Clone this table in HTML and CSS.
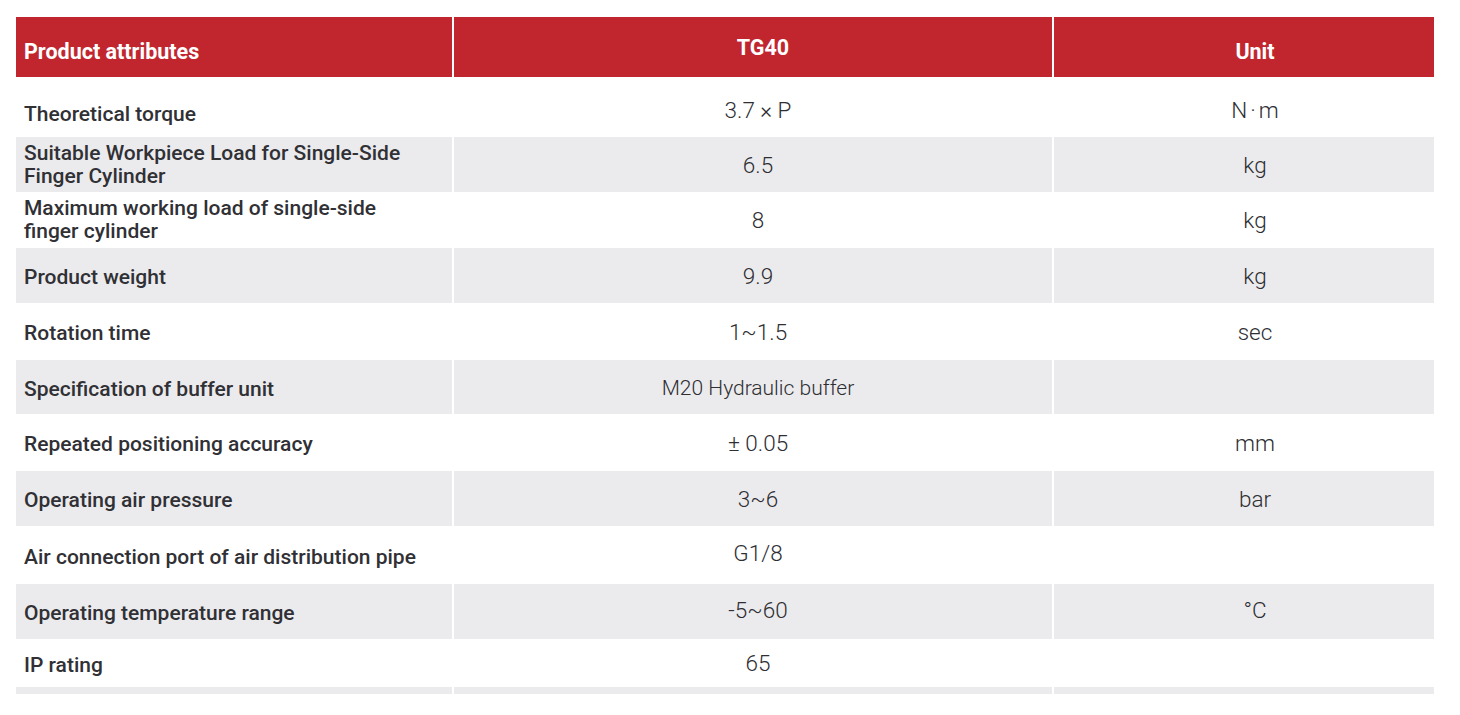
FILE: index.html
```html
<!DOCTYPE html>
<html lang="en">
<head>
<meta charset="utf-8">
<title>TG40 Product attributes</title>
<link rel="stylesheet" href="styles.css">
</head>
<body>
<div class="spec">
  <div class="cell head label">Product attributes</div>
  <div class="cell head model">TG40</div>
  <div class="cell head c3">Unit</div>

  <div class="cell label first">Theoretical torque</div>
  <div class="cell val c2 low">3.7 × P</div>
  <div class="cell val c3 low">N<span class="dot">·</span>m</div>

  <div class="cell label alt two">Suitable Workpiece Load for Single-Side<br>Finger Cylinder</div>
  <div class="cell val alt c2">6.5</div>
  <div class="cell val alt c3">kg</div>

  <div class="cell label two">Maximum working load of single-side<br>finger cylinder</div>
  <div class="cell val c2">8</div>
  <div class="cell val c3">kg</div>

  <div class="cell label alt">Product weight</div>
  <div class="cell val alt c2">9.9</div>
  <div class="cell val alt c3">kg</div>

  <div class="cell label">Rotation time</div>
  <div class="cell val c2">1~1.5</div>
  <div class="cell val c3">sec</div>

  <div class="cell label alt">Specification of buffer unit</div>
  <div class="cell val alt small c2">M20 Hydraulic buffer</div>
  <div class="cell val alt c3"></div>

  <div class="cell label">Repeated positioning accuracy</div>
  <div class="cell val c2">± 0.05</div>
  <div class="cell val c3">mm</div>

  <div class="cell label alt">Operating air pressure</div>
  <div class="cell val alt c2">3~6</div>
  <div class="cell val alt c3">bar</div>

  <div class="cell label">Air connection port of air distribution pipe</div>
  <div class="cell val up c2">G1/8</div>
  <div class="cell val c3"></div>

  <div class="cell label alt">Operating temperature range</div>
  <div class="cell val alt up c2">-5~60</div>
  <div class="cell val alt up c3">°C</div>

  <div class="cell label">IP rating</div>
  <div class="cell val c2">65</div>
  <div class="cell val c3"></div>

  <div class="cell alt strip"></div>
  <div class="cell alt strip"></div>
  <div class="cell alt strip"></div>
</div>
</body>
</html>
```

FILE: styles.css
```css
html, body {
  margin: 0;
  padding: 0;
  background: #ffffff;
}

body {
  padding: 17px 0 0 16px;
  font-family: Roboto, "Noto Sans", sans-serif;
  color: #2a2a2e;
}

.spec {
  display: grid;
  grid-template-columns: 436px 598px 380px;
  grid-template-rows: 60px 60px 55px 56px 55px 57px 54px 57px 55px 58px 55px 48px 7px;
  column-gap: 2px;
}

.cell {
  display: flex;
  align-items: center;
  justify-content: center;
  background: #ffffff;
  box-sizing: border-box;
}

.cell.alt {
  background: #ebebed;
}

.c2 {
  padding-left: 10px;
}

.c3 {
  padding-left: 22px;
}

.head {
  background: #c1262f;
  color: #ffffff;
  font-weight: 700;
  font-size: 21.5px;
  padding-top: 8px;
}

.head.model {
  padding-top: 0;
  padding-left: 20px;
}

.label {
  justify-content: flex-start;
  padding: 4px 0 0 8px;
  font-size: 21px;
  font-weight: 500;
  line-height: 23px;
  color: #303035;
}

.head.label {
  padding-top: 8px;
  color: #ffffff;
  font-weight: 700;
  font-size: 21.5px;
}

.label.first {
  padding-top: 14px;
}

.label.two {
  padding-top: 0;
}

.val {
  font-size: 22.5px;
  font-weight: 300;
  color: #2e2e33;
}

.val.low {
  padding-top: 6px;
}

.val.small {
  font-size: 21px;
  font-weight: 300;
  padding-top: 2px;
}

.val.up {
  padding-bottom: 4px;
}

.dot {
  margin: 0 3px;
}

.strip {
  background: #ebebed;
}
```
